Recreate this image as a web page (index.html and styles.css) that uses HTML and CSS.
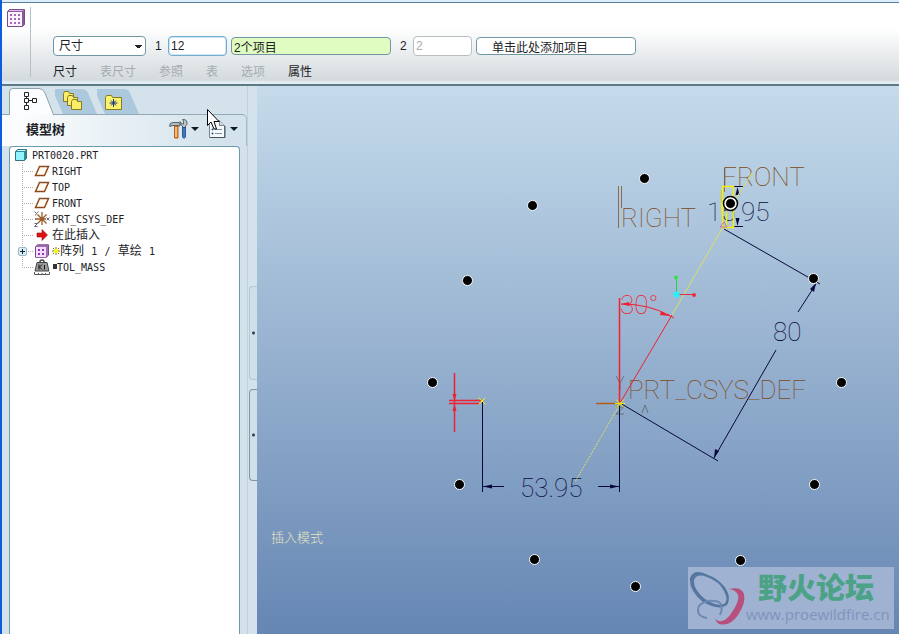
FILE: index.html
```html
<!DOCTYPE html>
<html lang="zh">
<head>
    <meta charset="UTF-8">
    <meta name="viewport" content="width=device-width, initial-scale=1.0">
    <title>PRT0020</title>
    <link rel="stylesheet" href="styles.css">
</head>
<body>
    <div class="main-body">
        <div class="dash-body">
            <div class="dash-icon">
                <svg width="18" height="18" viewBox="0 0 18 18">
                    <path d="M0.5 2.500L2.500 .5H17.500V15.500L15.500 17.500H.5Z" fill="#8a5a9a" stroke="#7b4a8c"/>
                    <path d="M1 3H15V17H1Z" fill="#fbf3ff"/>
                    <path d="M1.500 2H15L17 1H3Z" fill="#dcc0ea"/>
                    <path d="M3 6h2m2 0h2m2 0h2M3 10h2m2 0h2m2 0h2M3 14h2m2 0h2m2 0h2" stroke="#8a3ba6" stroke-width="1.500"/>
                </svg>
            </div>
            <div class="dash-content">
                <div class="dash-row">
                    <select class="field field-type" aria-label="阵列类型">
                        <option>尺寸</option>
                    </select>
                    <label class="num" for="count1">1</label>
                    <input class="field field-count active" id="count1" type="text" value="12">
                    <input class="field field-items collect" type="text" value="2个项目" aria-label="第一方向项目">
                    <label class="num" for="count2">2</label>
                    <input class="field field-count" id="count2" type="text" value="2" disabled>
                    <input class="field field-items add" type="text" value="单击此处添加项目" aria-label="第二方向项目">
                </div>
                <div class="dash-menu">
                    <button>尺寸</button>
                    <button disabled>表尺寸</button>
                    <button disabled>参照</button>
                    <button disabled>表</button>
                    <button disabled>选项</button>
                    <button>属性</button>
                </div>
            </div>
        </div>
        <div class="work-body">
            <div class="side-body">
                <div class="side-panel">
                    <div class="tabs">
                        <button class="tab tab-on" aria-label="模型树">
                            <svg width="46" height="27" viewBox="0 0 46 27">
                                <path d="M.5 28V4Q.5 .5 4 .5H30Q34 .5 36 5L45 28" fill="#fbfdfe" stroke="#8ba3ae"/>
                                <path d="M15.500 4.500h4v4h-4zM15.500 10.500h4v4h-4zM15.500 17.500h4v4h-4zM23.500 10.500h4v4h-4zM17.500 8.500v2M17.500 14.500v3M19.500 12.500h4" fill="none" stroke="#222"/>
                            </svg>
                        </button>
                        <button class="tab" aria-label="层">
                            <svg width="42" height="27" viewBox="0 0 42 27">
                                <path d="M-3 1H27Q31 1 33 5L42 26H8Z" fill="#abc8dc"/>
                                <g fill="#f8ee6a" stroke="#8a7a1c">
                                    <path d="M8.500 13.500v-8l1-2h4l1 2h4v8z"/>
                                    <path d="M12.500 17.500v-8l1-2h4l1 2h4v8z"/>
                                    <path d="M16.500 21.500v-8l1-2h4l1 2h4v8z"/>
                                </g>
                            </svg>
                        </button>
                        <button class="tab" aria-label="收藏夹">
                            <svg width="42" height="27" viewBox="0 0 42 27">
                                <path d="M-3 1H27Q31 1 33 5L42 26H8Z" fill="#abc8dc"/>
                                <path d="M8.500 21.500v-12l1-2h5l1 2h9v12z" fill="#fbf36e" stroke="#8a7a1c"/>
                                <path d="M16.500 11v8M12.500 15h8M14 12.500l5 5M19 12.500l-5 5" stroke="#15357c"/>
                            </svg>
                        </button>
                    </div>
                    <div class="side-head">
                        <div class="side-title">模型树</div>
                        <button class="tool" aria-label="设置">
                            <svg width="30" height="20" viewBox="0 0 30 20">
                                <path d="M5.500 7h3.500v12H5.500z" fill="#f09030" stroke="#a04a10" stroke-width=".8"/>
                                <path d="M7 8v10" stroke="#ffe8b8"/>
                                <path d="M.5 7Q.5 3.500 4 3.500H10l1 1.500v2H9.500V6.500H4Q2 6 1.500 8z" fill="#b4bcc0" stroke="#3c4a50" stroke-width=".8"/>
                                <path d="M11 2.500l2 2.500h1.500V2L13.500 .5Q17 -.2 18 3Q18.500 6 16.500 7v2h-3V7Q10.500 6 11 2.500z" fill="#bcc6ca" stroke="#3c4a50" stroke-width=".8"/>
                                <path d="M13.500 8.500h3V18l-1.500 1.500L13.500 18z" fill="#3f78c0" stroke="#1d4686" stroke-width=".8"/>
                                <path d="M22 8h8l-4 4z" fill="#0a1a28"/>
                            </svg>
                        </button>
                        <button class="tool" aria-label="显示">
                            <svg width="30" height="20" viewBox="0 0 30 20">
                                <path d="M1.500 1.500h10l5 5v12h-15z" fill="#f6fafc" stroke="#75858e"/>
                                <path d="M11.500 1.500v5h5" fill="#cfd9df" stroke="#75858e"/>
                                <path d="M2 18.500h15V7" fill="none" stroke="#46545c"/>
                                <path d="M7 10.500h7M7 14.500h7" stroke="#7090ad"/>
                                <circle cx="4.500" cy="10.500" r="1" fill="#2a4c7c"/>
                                <circle cx="4.500" cy="14.500" r="1" fill="#2a4c7c"/>
                                <path d="M22 8h8l-4 4z" fill="#0a1a28"/>
                            </svg>
                        </button>
                        <svg class="cursor" width="13" height="22" viewBox="0 0 13 22">
                            <path d="M.5 .5V16.500L4 13L7 20H9.500L7 12.500H12Z" fill="#fff" stroke="#000"/>
                        </svg>
                    </div>
                    <div class="tree-body">
                        <div class="tree-root">
                            <svg width="14" height="14" viewBox="0 0 14 14">
                                <path d="M1.500 3.500L3.500 1.500H12.500V10.500L10.500 12.500H1.500Z" fill="#2d8c96" stroke="#38737c"/>
                                <path d="M2 4h8v8H2z" fill="#8ff4fb"/>
                                <path d="M2.500 3L4 2h8l-1.500 1z" fill="#d5fcff"/>
                            </svg>
                            <span>PRT0020.PRT</span>
                        </div>
                        <ul class="tree-list">
                            <li class="tree-item"><span class="guide"></span>
                                <svg width="16" height="14" viewBox="0 0 16 14"><path d="M1.500 11.500L5.500 2.500H14.500L10.500 11.500Z" fill="#fffaf4" stroke="#8c4c1c" stroke-width="1.500"/></svg>
                                <span>RIGHT</span></li>
                            <li class="tree-item"><span class="guide"></span>
                                <svg width="16" height="14" viewBox="0 0 16 14"><path d="M1.500 11.500L5.500 2.500H14.500L10.500 11.500Z" fill="#fffaf4" stroke="#8c4c1c" stroke-width="1.500"/></svg>
                                <span>TOP</span></li>
                            <li class="tree-item"><span class="guide"></span>
                                <svg width="16" height="14" viewBox="0 0 16 14"><path d="M1.500 11.500L5.500 2.500H14.500L10.500 11.500Z" fill="#fffaf4" stroke="#8c4c1c" stroke-width="1.500"/></svg>
                                <span>FRONT</span></li>
                            <li class="tree-item"><span class="guide"></span>
                                <svg width="16" height="16" viewBox="0 0 16 16">
                                    <path d="M1 8h11M8 1v13M3.500 3.500l9 9M12.500 3.500l-9 9" stroke="#9a5a28" stroke-width="1.300"/>
                                    <path d="M.5 .5l2 2 2-2M2.500 2.500l-1 2M12.500 6.500l3 3M15.500 6.500l-3 3M.5 12.500h3l-3 3h3" fill="none" stroke="#667"/>
                                </svg>
                                <span>PRT_CSYS_DEF</span></li>
                            <li class="tree-item"><span class="guide"></span>
                                <svg width="16" height="14" viewBox="0 0 16 14"><path d="M3 5h5V1.500L13.500 7L8 12.500V9H3Z" fill="#e01010" stroke="#901010" stroke-width=".6"/></svg>
                                <span class="cn">在此插入</span></li>
                            <li class="tree-item"><span class="guide"><button class="plus" aria-label="展开"></button></span>
                                <svg width="16" height="14" viewBox="0 0 16 14">
                                    <path d="M1.500 3L3.500 .8H14.500V11L12.500 13.300H1.500Z" fill="#a070b4" stroke="#7b4a8c"/>
                                    <path d="M2 3h10v10H2z" fill="#f3dcfb"/>
                                    <path d="M4 6h2m2 0h2M4 10h2m2 0h2" stroke="#8a3ba6" stroke-width="2"/>
                                </svg>
                                <svg class="mark" width="8" height="8" viewBox="0 0 8 8"><path d="M4 0v8M0 4h8M1 1l6 6M7 1L1 7" stroke="#77761c"/><path d="M2 2h4v4H2z" fill="#f8f428"/></svg>
                                <span class="cn">阵列 <span class="en">1</span> <span class="en">/</span> 草绘 <span class="en">1</span></span></li>
                            <li class="tree-item"><span class="guide guide-last"></span>
                                <svg width="16" height="16" viewBox="0 0 16 16">
                                    <path d="M6 3a2 2 0 1 1 4 0" fill="none" stroke="#444" stroke-width="1.500"/>
                                    <path d="M3 3.500h10l2 8.500H1z" fill="#9a9a9a" stroke="#444"/>
                                    <path d="M5 5.500v5M8 5.500l-2.500 2.500L8 10.500M10.500 6v4.500" fill="none" stroke="#111"/>
                                    <path d="M.5 13v2.500h15V13M4.500 14v1M8 14v1M11.500 14v1" fill="none" stroke="#555"/>
                                </svg>
                                <svg class="dot" width="5" height="5" viewBox="0 0 5 5"><path d="M1 0h4v5H1z" fill="#333"/></svg>
                                <span>TOL_MASS</span></li>
                        </ul>
                    </div>
                </div>
                <div class="split-body">
                    <button class="grip grip-off" aria-label="折叠"></button>
                    <button class="grip" aria-label="展开面板"></button>
                </div>
            </div>
            <div class="view-body">
                <svg class="view-draw" viewBox="257 86 642 548" preserveAspectRatio="xMinYMin meet">
                    <!-- datum labels -->
                    <g class="datum">
                        <path d="M618.500 186V228M621.500 186V208M724.500 168V192M721.500 190V202"/>
                        <text x="621" y="227">RIGHT</text>
                        <text x="722" y="186">FRONT</text>
                        <text x="628" y="399">PRT_CSYS_DEF</text>
                        <path d="M616 376L620 383L624 376M620 383V390M642 413L645 405L648 413M616 407H624L616 414H624" stroke="#66717c"/>
                    </g>
                    <!-- linear dimensions -->
                    <g class="dim">
                        <path d="M482.500 402V492M619.500 404V492M483 486.500H504M598 486.500H619"/>
                        <path d="M620 403L718 461M724 229L820 284M816 284L798 312M776 350L714 458M733 186.500H743M733 226.500H743"/>
                        <path d="M483 486.500l9-2v4zM619 486.500l-9-2v4zM714 458l1-9 4 2zM816 283l-6 6 4 3zM737.500 187l-2 8h4zM737.500 226l-2-8h4z" class="tip"/>
                        <text x="520" y="497">53.95</text>
                        <text x="773" y="341">80</text>
                        <text x="707" y="221">15.95</text>
                    </g>
                    <!-- angle and offset -->
                    <g class="angle">
                        <path d="M620 403L672 315M621 304Q650 304 670 316M667 314L674 318"/>
                        <path d="M619.500 298V403M449 400.500H482M449 403.500H480M454.500 373V432" stroke-width="1.500"/>
                        <path d="M621 304l8-2v4zM670 316l-9-5-1 4zM454.500 401l-2-7h4zM454.500 404l-2 7h4z" class="tip"/>
                        <text x="620" y="314">30°</text>
                    </g>
                    <path d="M596 403.500H620" stroke="#b05c10" stroke-width="1.500"/>
                    <!-- sketch geometry -->
                    <g class="sketch">
                        <path d="M722.500 228L672 315M735 200L752 173"/>
                        <path d="M620 404L575 482" stroke-dasharray="2 1"/>
                        <path d="M722.500 186.500H733.500V227.500H722.500ZM726.500 212V227M722 213V190" stroke="#f4f000" stroke-width="1.500"/>
                        <path d="M478.500 397.500l7 7M485.500 397.500l-7 7M616 399.500l8 8M624 399.500l-8 8M615 403.500h10" stroke="#f4f000"/>
                        <path d="M720 227h7l-3-5z" fill="none" stroke="#c070c0"/>
                    </g>
                    <g>
                        <path d="M676.500 278V294" stroke="#28d048"/>
                        <path d="M677 294.500H694" stroke="#e03038"/>
                        <circle cx="676" cy="277.500" r="2" fill="#38e048"/>
                        <circle cx="694" cy="295" r="2" fill="#e83038"/>
                        <circle cx="676.500" cy="294.500" r="3" fill="#20f4f8"/>
                    </g>
                    <!-- pattern instances -->
                    <circle cx="730.500" cy="203.500" r="7" fill="#fff" stroke="#000" stroke-width="1.500"/>
                    <g class="point">
                        <circle cx="644.500" cy="178.500" r="5"/>
                        <circle cx="532.500" cy="205.500" r="5"/>
                        <circle cx="467.500" cy="280.500" r="5"/>
                        <circle cx="432.500" cy="382.500" r="5"/>
                        <circle cx="459.500" cy="484.500" r="5"/>
                        <circle cx="534.500" cy="559.500" r="5"/>
                        <circle cx="635.500" cy="586.500" r="5"/>
                        <circle cx="740.500" cy="560.500" r="5"/>
                        <circle cx="814.500" cy="484.500" r="5"/>
                        <circle cx="841.500" cy="382.500" r="5"/>
                        <circle cx="813.500" cy="278.500" r="5"/>
                        <circle cx="730.500" cy="203.500" r="5"/>
                    </g>
                    <text class="mode" x="271" y="542">插入模式</text>
                </svg>
                <div class="logo-body">
                    <svg width="58" height="58" viewBox="0 0 58 58">
                        <path d="M41 20Q53 17 56 25Q58 34 50 46Q42 58 31 55Q28 53 27 50Q34 56 42 46Q52 32 50 26Q48 21 41 20Z" fill="#b8507e"/>
                        <path d="M20 6Q6 -1 2 9Q1 22 15 33Q31 42 39 36Q44 28 36 17Q29 9 20 6ZM19 8Q31 12 36 22Q41 32 36 35Q29 38 17 30Q5 20 6 11Q9 4 19 8Z" fill="#54769f"/>
                        <path d="M31 33Q18 29 11 37Q7 47 19 49M31 33Q36 37 32 46" fill="none" stroke="#6e88b4" stroke-width="2"/>
                    </svg>
                    <div class="logo-text">
                        <div class="logo-name">野火论坛</div>
                        <div class="logo-url">www.proewildfire.cn</div>
                    </div>
                </div>
            </div>
        </div>
    </div>
</body>
</html>
```

FILE: styles.css
```css
* {
    box-sizing: border-box;
}
body {
    padding: 0;
    margin: 0;
    font-family: "Liberation Sans", "Noto Sans CJK SC", sans-serif;
    font-size: 12px;
    color: #1c2226;
}
button {
    padding: 0;
    border: none;
    background: none;
    font: inherit;
    color: inherit;
}
svg {
    display: block;
    flex: none;
}
.main-body {
    min-height: 100vh;
    display: flex;
    flex-direction: column;
    border-left: 2px solid #0c5ce0;
}

/* dashboard */
.dash-body {
    height: 86px;
    display: flex;
    border-top: 2px solid #dcecf8;
    border-bottom: 2px solid #5f7886;
    background: linear-gradient(#5f7f98 1px, #fff 1px, #fff 26px, #d4dadd 78px, #e2edf4 80px);
}
.dash-icon {
    width: 29px;
    height: 70px;
    margin-top: 5px;
    padding: 2px 0 0 5px;
    border-right: 1px solid #b4c2ca;
}
.dash-content {
    padding: 34px 0 0 22px;
}
.dash-row {
    height: 20px;
    display: flex;
    align-items: center;
    gap: 4px;
}
.field {
    height: 18px;
    padding: 0 2px;
    border: 1px solid #6f98a4;
    border-radius: 4px;
    background: #fff;
    font: inherit;
    color: inherit;
    outline: none;
}
.field-type {
    width: 93px;
    height: 20px;
    padding-left: 5px;
    appearance: none;
    background: conic-gradient(from -45deg at 50% 100%, #222 90deg, transparent 0) 81px 8px / 7px 4px no-repeat, #fff;
    background: linear-gradient(#222, #222) 81px 8px / 7px 1px no-repeat, linear-gradient(#222, #222) 82px 9px / 5px 1px no-repeat, linear-gradient(#222, #222) 83px 10px / 3px 1px no-repeat, #fff;
}
.field-count {
    width: 59px;
    height: 20px;
}
.field-count.active {
    border-color: #74acd0;
    box-shadow: inset 0 0 0 1px #d0e6f4;
}
.field-count:disabled {
    border-color: #b8bec2;
    color: #a8aeb2;
}
.field-items {
    width: 160px;
}
.field-items.collect {
    background: #e0fcc0;
}
.field-items.add {
    padding-left: 15px;
}
.num {
    width: 14px;
    padding-left: 5px;
}
.dash-menu {
    display: flex;
    gap: 23px;
    margin-top: 7px;
}
.dash-menu button {
    line-height: 18px;
}
.dash-menu button:disabled {
    color: #a4acb0;
}

/* side panel */
.work-body {
    flex: 1;
    display: flex;
}
.side-body {
    width: 255px;
    flex: none;
    display: flex;
    background: #d3e2eb;
}
.side-panel {
    flex: 1;
    display: flex;
    flex-direction: column;
}
.tabs {
    display: flex;
    padding: 2px 0 0 7px;
    margin-bottom: -1px;
}
.tab-on {
    position: relative;
    z-index: 1;
}
.side-head {
    position: relative;
    height: 32px;
    display: flex;
    align-items: center;
    gap: 9px;
    padding: 0 8px 4px 24px;
    border-top: 1px solid #93aab6;
    border-right: 1px solid #a8bcc8;
    border-top-right-radius: 5px;
    background: linear-gradient(90deg, #fafcfd 10%, #d3e2eb 90%);
}
.side-title {
    flex: 1;
    font-size: 13px;
    font-weight: bold;
}
.cursor {
    position: absolute;
    left: 205px;
    top: -6px;
}
.tree-body {
    flex: 1;
    margin: 0 0 0 7px;
    width: 231px;
    border: 1px solid #6b9cac;
    border-bottom: none;
    border-radius: 4px 4px 0 0;
    background: #fff;
    font-family: "DejaVu Sans Mono", "Noto Sans CJK SC", monospace;
    font-size: 10px;
}
.tree-root {
    height: 16px;
    display: flex;
    align-items: center;
    gap: 4px;
    padding-left: 4px;
}
.tree-list {
    list-style: none;
    margin: 0;
    padding: 0;
}
.tree-item {
    height: 16px;
    display: flex;
    align-items: center;
    white-space: nowrap;
}
.tree-item > span {
    margin-left: 2px;
}
.tree-item .mark {
    margin-left: 2px;
}
.tree-item .dot {
    margin: 0 0 2px 2px;
}
.tree-item .mark + span,
.tree-item .dot + span {
    margin-left: 0;
}
.cn {
    font-size: 12px;
    line-height: 16px;
}
.en {
    font-size: 10px;
}
.tree-item .guide {
    width: 24px;
    height: 16px;
    margin: 0;
    display: flex;
    align-items: center;
    padding-left: 8px;
    background:
        repeating-linear-gradient(#b0b0b0 0 1px, transparent 1px 2px) 12px 0 / 1px 16px no-repeat,
        repeating-linear-gradient(90deg, #b0b0b0 0 1px, transparent 1px 2px) 12px 8px / 11px 1px no-repeat;
}
.tree-item .guide-last {
    background-size: 1px 8px, 11px 1px;
}
.plus {
    width: 9px;
    height: 9px;
    border: 1px solid #9ab8c8;
    border-radius: 2px;
    background:
        linear-gradient(#123, #123) center / 5px 1px no-repeat,
        linear-gradient(#123, #123) center / 1px 5px no-repeat,
        #d8ecf4;
}
.split-body {
    width: 10px;
    padding-top: 200px;
    display: flex;
    flex-direction: column;
    align-items: flex-end;
    gap: 9px;
    border-left: 1px solid #c0d0da;
    background: #d3e2eb;
}
.grip {
    width: 8px;
    height: 92px;
    border: 1px solid #8296a2;
    border-right: none;
    border-radius: 4px 0 0 4px;
    background: radial-gradient(circle, #345 1px, transparent 2px), #cfe0ea;
}
.grip-off {
    height: 94px;
    border-color: #b4c8d4;
}

/* graphics window */
.view-body {
    position: relative;
    flex: 1;
    min-width: 0;
    background: linear-gradient(#c5dbeb, #6686b3);
}
.view-draw {
    width: 100%;
    height: auto;
    fill: none;
    stroke-width: 1;
}
.view-draw text {
    font-family: Roboto, "Liberation Sans", sans-serif;
    font-size: 26px;
    font-weight: 100;
    stroke: none;
}
.datum {
    stroke: #8a6c50;
}
.datum text {
    fill: #7c4a20;
}
.dim {
    stroke: #08083c;
}
.dim text,
.dim .tip {
    fill: #08083c;
}
.angle {
    stroke: #f02030;
}
.angle text,
.angle .tip {
    fill: #f02030;
}
.view-draw .tip {
    stroke: none;
}
.sketch {
    stroke: #dce060;
}
.point {
    fill: #000;
    stroke: #fff;
}
.view-draw .mode {
    fill: #e4e4c0;
    font-family: "Noto Sans CJK SC", sans-serif;
    font-size: 13px;
    font-weight: 300;
}
.logo-body {
    position: absolute;
    right: 5px;
    bottom: 5px;
    width: 206px;
    height: 62px;
    display: flex;
    align-items: center;
    background: #9fb2d1;
}
.logo-text {
    white-space: nowrap;
}
.logo-name {
    padding-left: 12px;
    font-family: "Noto Sans CJK SC", sans-serif;
    font-size: 29px;
    font-weight: 900;
    line-height: 32px;
    color: #4ba286;
}
.logo-url {
    font-family: "Open Sans", sans-serif;
    font-size: 15px;
    line-height: 24px;
    color: #7f93bd;
}
```
